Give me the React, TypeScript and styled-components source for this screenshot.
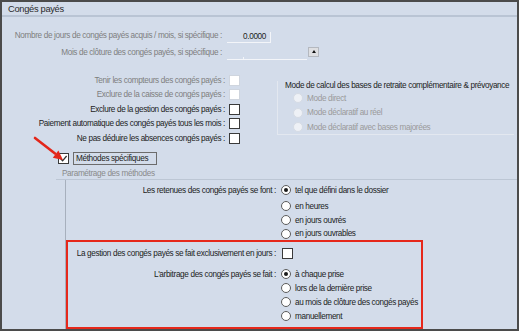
import React from 'react';
import styled, { createGlobalStyle } from 'styled-components';

const GlobalStyle = createGlobalStyle`
  html, body {
    margin: 0;
    padding: 0;
    background: #ffffff;
  }
  body {
    font-family: "Liberation Sans", Arial, sans-serif;
  }
`;

const Frame = styled.div`
  position: relative;
  box-sizing: border-box;
  width: 519px;
  height: 331px;
  border: 2px solid #4b4b4b;
  background: #d3dcea;
  overflow: hidden;
  font-size: 8.2px;
  letter-spacing: -0.35px;
  color: #1c1c1c;
`;

const Header = styled.div`
  height: 13px;
  border-bottom: 2px solid #b9c4d4;
  padding-left: 6px;
  font-size: 9.3px;
  letter-spacing: -0.3px;
  line-height: 14px;
  color: #2a2a2a;
`;

const Row = styled.div<{ $h?: number; $mt?: number }>`
  display: flex;
  align-items: center;
  height: ${p => p.$h ?? 14}px;
  margin-top: ${p => p.$mt ?? 0}px;
  white-space: nowrap;
`;

const Label = styled.span<{ $w: number; $muted?: boolean; $gap?: number }>`
  flex: none;
  width: ${p => p.$w}px;
  margin-right: ${p => p.$gap ?? 5}px;
  text-align: right;
  color: ${p => (p.$muted ? '#7e7e7e' : '#1c1c1c')};
`;

const NumberInput = styled.div`
  box-sizing: border-box;
  width: 44px;
  height: 11px;
  margin-top: 3px;
  padding-right: 4px;
  border-right: 1px solid #f3f5f9;
  border-bottom: 1px solid #f3f5f9;
  text-align: right;
  line-height: 9px;
  color: #1c1c1c;
`;

const ComboLine = styled.div`
  position: relative;
  width: 80px;
  height: 12px;
  margin-top: 2px;
  border-bottom: 1px solid #f3f5f9;

  &::after {
    content: '';
    position: absolute;
    left: 16px;
    bottom: 0;
    width: 1px;
    height: 2px;
    background: #f3f5f9;
  }
`;

const ComboButton = styled.div`
  box-sizing: border-box;
  display: flex;
  align-items: center;
  justify-content: center;
  width: 11px;
  height: 10px;
  margin-left: 1px;
  margin-top: -1px;
  background: #dedfe2;
  border: 1px solid #b4b8bf;

  &::before {
    content: '';
    border-left: 2.5px solid transparent;
    border-right: 2.5px solid transparent;
    border-bottom: 3px solid #111;
  }
`;

const Box = styled.span<{ $disabled?: boolean }>`
  box-sizing: border-box;
  flex: none;
  display: flex;
  align-items: center;
  justify-content: center;
  width: 11px;
  height: 11px;
  background: #ffffff;
  border: 1px solid ${p => (p.$disabled ? '#cfd5de' : '#3a3a3a')};
`;

const Radio = styled.span<{ $checked?: boolean; $disabled?: boolean }>`
  box-sizing: border-box;
  flex: none;
  display: flex;
  align-items: center;
  justify-content: center;
  width: 10px;
  height: 10px;
  margin-right: 4px;
  border-radius: 50%;
  background: ${p => (p.$disabled ? '#eef1f6' : '#ffffff')};
  border: 1px solid ${p => (p.$disabled ? '#d6dce5' : '#5c5c5c')};

  &::after {
    content: '';
    display: ${p => (p.$checked ? 'block' : 'none')};
    width: 4px;
    height: 4px;
    border-radius: 50%;
    background: #1a1a1a;
  }
`;

const OptionText = styled.span<{ $muted?: boolean }>`
  color: ${p => (p.$muted ? '#9a9a9a' : '#1c1c1c')};
`;

const Section = styled.div`
  display: flex;
  margin-top: 14px;
`;

const LeftColumn = styled.div`
  width: 275px;
`;

const ModeGroup = styled.div`
  margin-top: 8px;
  width: 236px;
  height: 53px;
  border-left: 1px solid #e3e8f0;
  border-bottom: 1px solid #e3e8f0;
`;

const GroupTitle = styled.div`
  height: 10px;
  padding-left: 7px;
  line-height: 10px;
  white-space: nowrap;
`;

const OptionRow = styled.div<{ $indent: number; $h?: number; $mt?: number }>`
  display: flex;
  align-items: center;
  height: ${p => p.$h ?? 14.5}px;
  margin-top: ${p => p.$mt ?? 0}px;
  padding-left: ${p => p.$indent}px;
  white-space: nowrap;
`;

const MethodsRow = styled.div`
  display: flex;
  align-items: center;
  height: 14px;
  margin-top: 5.5px;
  padding-left: 56px;
`;

const MethodsLabel = styled.span`
  box-sizing: border-box;
  height: 13px;
  width: 84px;
  margin-left: 4px;
  padding-left: 2px;
  border: 1px solid #6c6c6c;
  line-height: 11px;
`;

const SubTitle = styled.div`
  height: 10px;
  margin-top: 4px;
  padding-left: 60px;
  line-height: 10px;
  color: #8a8a8a;
`;

const ParamGroup = styled.div`
  margin-left: 54px;
  border-top: 1px solid #bcc6d4;
  height: 160px;
`;

const ParamPanel = styled.div`
  margin-left: 9px;
  height: 100%;
  border-left: 1px solid #a7b0bd;
  padding-top: 3px;
`;

const Highlight = styled.div`
  box-sizing: border-box;
  width: 357px;
  height: 89px;
  border: 2px solid #e6281b;
`;

const Arrow = styled.svg`
  position: absolute;
  left: 0;
  top: 0;
  pointer-events: none;
`;

const Check = () => (
  <svg width="9" height="9" viewBox="0 0 9 9">
    <path d="M1.5 4.6 L3.6 6.8 L7.6 2" fill="none" stroke="#333" strokeWidth="1.3" />
  </svg>
);

const checks: { label: string; disabled?: boolean }[] = [
  { label: 'Tenir les compteurs des congés payés :', disabled: true },
  { label: 'Exclure de la caisse de congés payés :', disabled: true },
  { label: 'Exclure de la gestion des congés payés :' },
  { label: 'Paiement automatique des congés payés tous les mois :' },
  { label: 'Ne pas déduire les absences congés payés :' },
];

const modes = ['Mode direct', 'Mode déclaratif au réel', 'Mode déclaratif avec bases majorées'];

const retenues = [
  'tel que défini dans le dossier',
  'en heures',
  'en jours ouvrés',
  'en jours ouvrables',
];

const arbitrage = [
  'à chaque prise',
  'lors de la dernière prise',
  'au mois de clôture des congés payés',
  'manuellement',
];

export default function App() {
  return (
    <>
      <GlobalStyle />
      <Frame>
        <Header>Congés payés</Header>

        <Row $mt={12} $h={13}>
          <Label $w={220} $muted>Nombre de jours de congés payés acquis / mois, si spécifique :</Label>
          <NumberInput>0.0000</NumberInput>
        </Row>
        <Row $mt={3}>
          <Label $w={220} $muted>Mois de clôture des congés payés, si spécifique :</Label>
          <ComboLine />
          <ComboButton />
        </Row>

        <Section>
          <LeftColumn>
            {checks.map(c => (
              <Row key={c.label} $h={14.5}>
                <Label $w={223} $gap={4} $muted={c.disabled}>{c.label}</Label>
                <Box $disabled={c.disabled} />
              </Row>
            ))}
          </LeftColumn>
          <ModeGroup>
            <GroupTitle>Mode de calcul des bases de retraite complémentaire &amp; prévoyance</GroupTitle>
            {modes.map(m => (
              <OptionRow key={m} $indent={15}>
                <Radio $disabled />
                <OptionText $muted>{m}</OptionText>
              </OptionRow>
            ))}
          </ModeGroup>
        </Section>

        <MethodsRow>
          <Box>
            <Check />
          </Box>
          <MethodsLabel>Méthodes spécifiques</MethodsLabel>
        </MethodsRow>
        <SubTitle>Paramétrage des méthodes</SubTitle>

        <ParamGroup>
          <ParamPanel>
            {retenues.map((r, i) => (
              <Row key={r} $h={i === 3 ? 13 : 14} $mt={i === 1 ? 2 : 0}>
                <Label $w={210} $gap={5}>{i === 0 ? 'Les retenues des congés payés se font :' : ''}</Label>
                <Radio $checked={i === 0} />
                <OptionText>{r}</OptionText>
              </Row>
            ))}

            <Highlight>
              <Row $mt={4}>
                <Label $w={208} $gap={6}>La gestion des congés payés se fait exclusivement en jours :</Label>
                <Box />
              </Row>
              <Row $mt={7}>
                <Label $w={208} $gap={5}>L'arbitrage des congés payés se fait :</Label>
                <Radio $checked />
                <OptionText>{arbitrage[0]}</OptionText>
              </Row>
              {arbitrage.slice(1).map(a => (
                <Row key={a}>
                  <Label $w={208} $gap={5} />
                  <Radio />
                  <OptionText>{a}</OptionText>
                </Row>
              ))}
            </Highlight>
          </ParamPanel>
        </ParamGroup>

        <Arrow width="80" height="170" viewBox="0 0 80 170">
          <line x1="33" y1="136" x2="53" y2="151.5" stroke="#e3261a" strokeWidth="2.6" strokeLinecap="round" />
          <polygon points="61,158 50.8,155.8 56.4,148.6" fill="#e3261a" />
        </Arrow>
      </Frame>
    </>
  );
}
